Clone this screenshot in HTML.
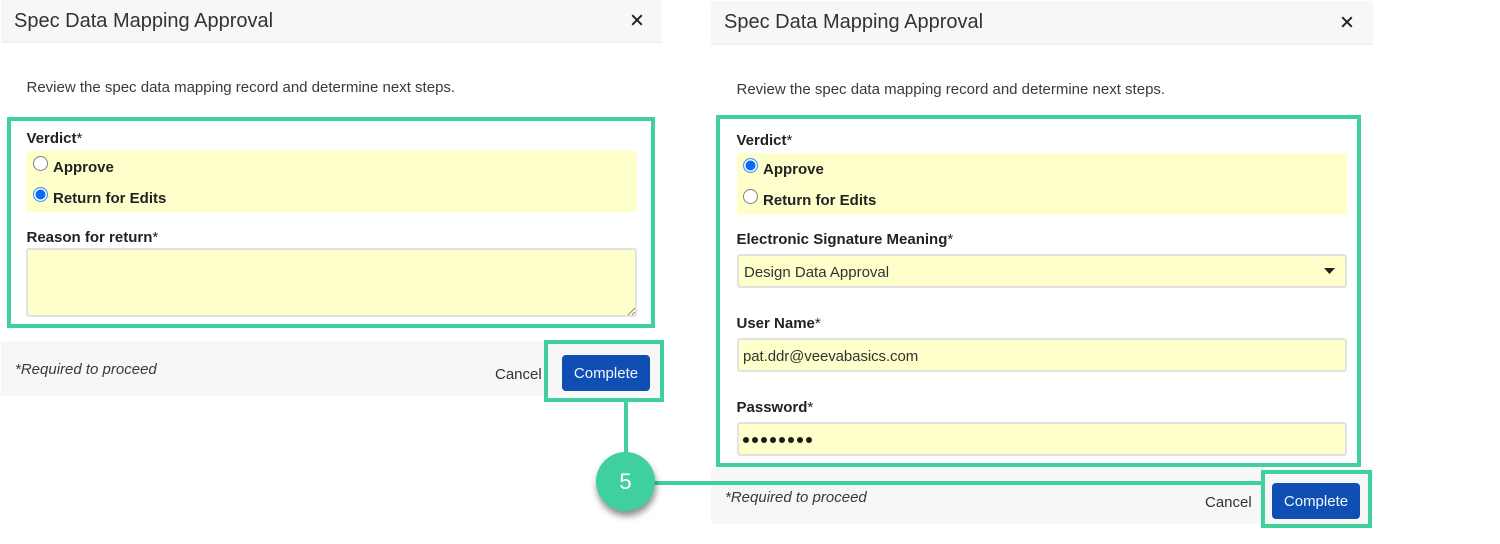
<!DOCTYPE html>
<html><head><meta charset="utf-8">
<style>
html,body{margin:0;padding:0;background:#fff;}
body{width:1500px;height:544px;position:relative;overflow:hidden;font-family:"Liberation Sans",sans-serif;color:#333;}
.a{position:absolute;box-sizing:border-box;}
.t{position:absolute;white-space:nowrap;line-height:18px;}
.title{font-size:20px;line-height:24px;color:#333;}
.p{font-size:15px;color:#3a3a3a;}
.l{font-size:15px;font-weight:bold;color:#222;}
.y{background:#ffffcb;}
.f{background:#ffffcb;border:2px solid #e2e2e0;border-radius:3px;}
.g{border:4px solid #40d09e;}
.gb{background:#40d09e;}
.hd{background:#f7f7f7;border-bottom:2px solid #f1f1f1;}
.ft{background:#f7f7f7;}
.btn{background:#0f4eb3;border-radius:4px;color:#f4f7ff;font-size:15px;text-align:center;}
.r{position:absolute;width:15px;height:15px;border-radius:50%;box-sizing:border-box;background:#fff;border:1.5px solid #808080;}
.r.on{border:1.5px solid #3f8cf5;background:#0a6cf5;box-shadow:inset 0 0 0 1.5px #fff;}
.i{font-style:italic;font-size:15px;color:#3a3a3a;}
.c{font-size:15px;color:#333;}
</style></head>
<body>
<!-- left panel -->
<div class="a hd" style="left:1px;top:0;width:660px;height:43px;"></div>
<div class="t title" style="left:14px;top:9px;">Spec Data Mapping Approval</div>
<svg class="a" style="left:629.5px;top:13px;" width="14" height="14" viewBox="0 0 14 14"><path d="M2.2 2.2L11.8 11.8M11.8 2.2L2.2 11.8" stroke="#222" stroke-width="1.9" fill="none"/></svg>
<div class="t p" style="left:26.5px;top:79px;">Review the spec data mapping record and determine next steps.</div>
<div class="t l" style="left:26.5px;top:130px;">Verdict<span style="font-weight:normal">*</span></div>
<div class="a y" style="left:26px;top:151px;width:611px;height:61px;"></div>
<div class="r" style="left:33px;top:156px;"></div>
<div class="t l" style="left:53px;top:159px;">Approve</div>
<div class="r on" style="left:33px;top:187px;"></div>
<div class="t l" style="left:53px;top:190px;">Return for Edits</div>
<div class="t l" style="left:26.5px;top:229px;">Reason for return<span style="font-weight:normal">*</span></div>
<div class="a f" style="left:26px;top:248px;width:611px;height:69px;"></div>
<svg class="a" style="left:627px;top:307px;" width="9" height="9" viewBox="0 0 9 9"><path d="M1 8L8 1M5 8L8 5" stroke="#888" stroke-width="1" fill="none"/></svg>
<div class="a g" style="left:7px;top:117px;width:648px;height:211px;"></div>
<div class="a ft" style="left:1px;top:341px;width:660px;height:55px;"></div>
<div class="t i" style="left:15px;top:361px;">*Required to proceed</div>
<div class="t c" style="left:495px;top:366px;">Cancel</div>
<div class="a btn" style="left:562px;top:355px;width:88px;height:36px;line-height:38px;">Complete</div>
<div class="a g" style="left:544px;top:340px;width:120px;height:62px;"></div>

<!-- right panel -->
<div class="a hd" style="left:711px;top:1px;width:662px;height:44px;"></div>
<div class="t title" style="left:724px;top:10px;">Spec Data Mapping Approval</div>
<svg class="a" style="left:1339.5px;top:15px;" width="14" height="14" viewBox="0 0 14 14"><path d="M2.2 2.2L11.8 11.8M11.8 2.2L2.2 11.8" stroke="#222" stroke-width="1.9" fill="none"/></svg>
<div class="t p" style="left:736.5px;top:81px;">Review the spec data mapping record and determine next steps.</div>
<div class="t l" style="left:736.5px;top:132px;">Verdict<span style="font-weight:normal">*</span></div>
<div class="a y" style="left:737px;top:153px;width:610px;height:62px;"></div>
<div class="r on" style="left:743px;top:158px;"></div>
<div class="t l" style="left:763px;top:161px;">Approve</div>
<div class="r" style="left:743px;top:189px;"></div>
<div class="t l" style="left:763px;top:192px;">Return for Edits</div>
<div class="t l" style="left:736.5px;top:231px;">Electronic Signature Meaning<span style="font-weight:normal">*</span></div>
<div class="a f" style="left:737px;top:254px;width:610px;height:34px;"></div>
<div class="t c" style="left:744px;top:264px;">Design Data Approval</div>
<svg class="a" style="left:1323px;top:267px;" width="13" height="8" viewBox="0 0 13 8"><path d="M1 1H12L6.5 7Z" fill="#222"/></svg>
<div class="t l" style="left:736.5px;top:315px;">User Name<span style="font-weight:normal">*</span></div>
<div class="a f" style="left:737px;top:338px;width:610px;height:34px;"></div>
<div class="t c" style="left:743px;top:348px;letter-spacing:-0.08px;">pat.ddr@veevabasics.com</div>
<div class="t l" style="left:736.5px;top:399px;">Password<span style="font-weight:normal">*</span></div>
<div class="a f" style="left:737px;top:422px;width:610px;height:34px;"></div>
<svg class="a" style="left:742px;top:434px;" width="74" height="12" viewBox="0 0 74 12" fill="#1c1c1c"><circle cx="4" cy="6" r="3"/><circle cx="13" cy="6" r="3"/><circle cx="22" cy="6" r="3"/><circle cx="31" cy="6" r="3"/><circle cx="40" cy="6" r="3"/><circle cx="49" cy="6" r="3"/><circle cx="58" cy="6" r="3"/><circle cx="67" cy="6" r="3"/></svg>
<div class="a ft" style="left:711px;top:468px;width:662px;height:56px;"></div>
<div class="a g" style="left:716px;top:115px;width:645px;height:352px;"></div>
<div class="t i" style="left:725px;top:489px;">*Required to proceed</div>
<div class="t c" style="left:1205px;top:494px;">Cancel</div>
<div class="a btn" style="left:1272px;top:483px;width:88px;height:36px;line-height:38px;">Complete</div>
<div class="a g" style="left:1261px;top:470px;width:111px;height:58px;"></div>

<!-- connector -->
<div class="a gb" style="left:624px;top:402px;width:4px;height:60px;"></div>
<div class="a gb" style="left:650px;top:481px;width:612px;height:4px;"></div>
<div class="a" style="left:596px;top:452px;width:59px;height:59px;border-radius:50%;background:#40d09e;box-shadow:1px 5px 7px rgba(0,0,0,.45);color:#fff;font-size:22px;line-height:59px;text-align:center;">5</div>
</body></html>
